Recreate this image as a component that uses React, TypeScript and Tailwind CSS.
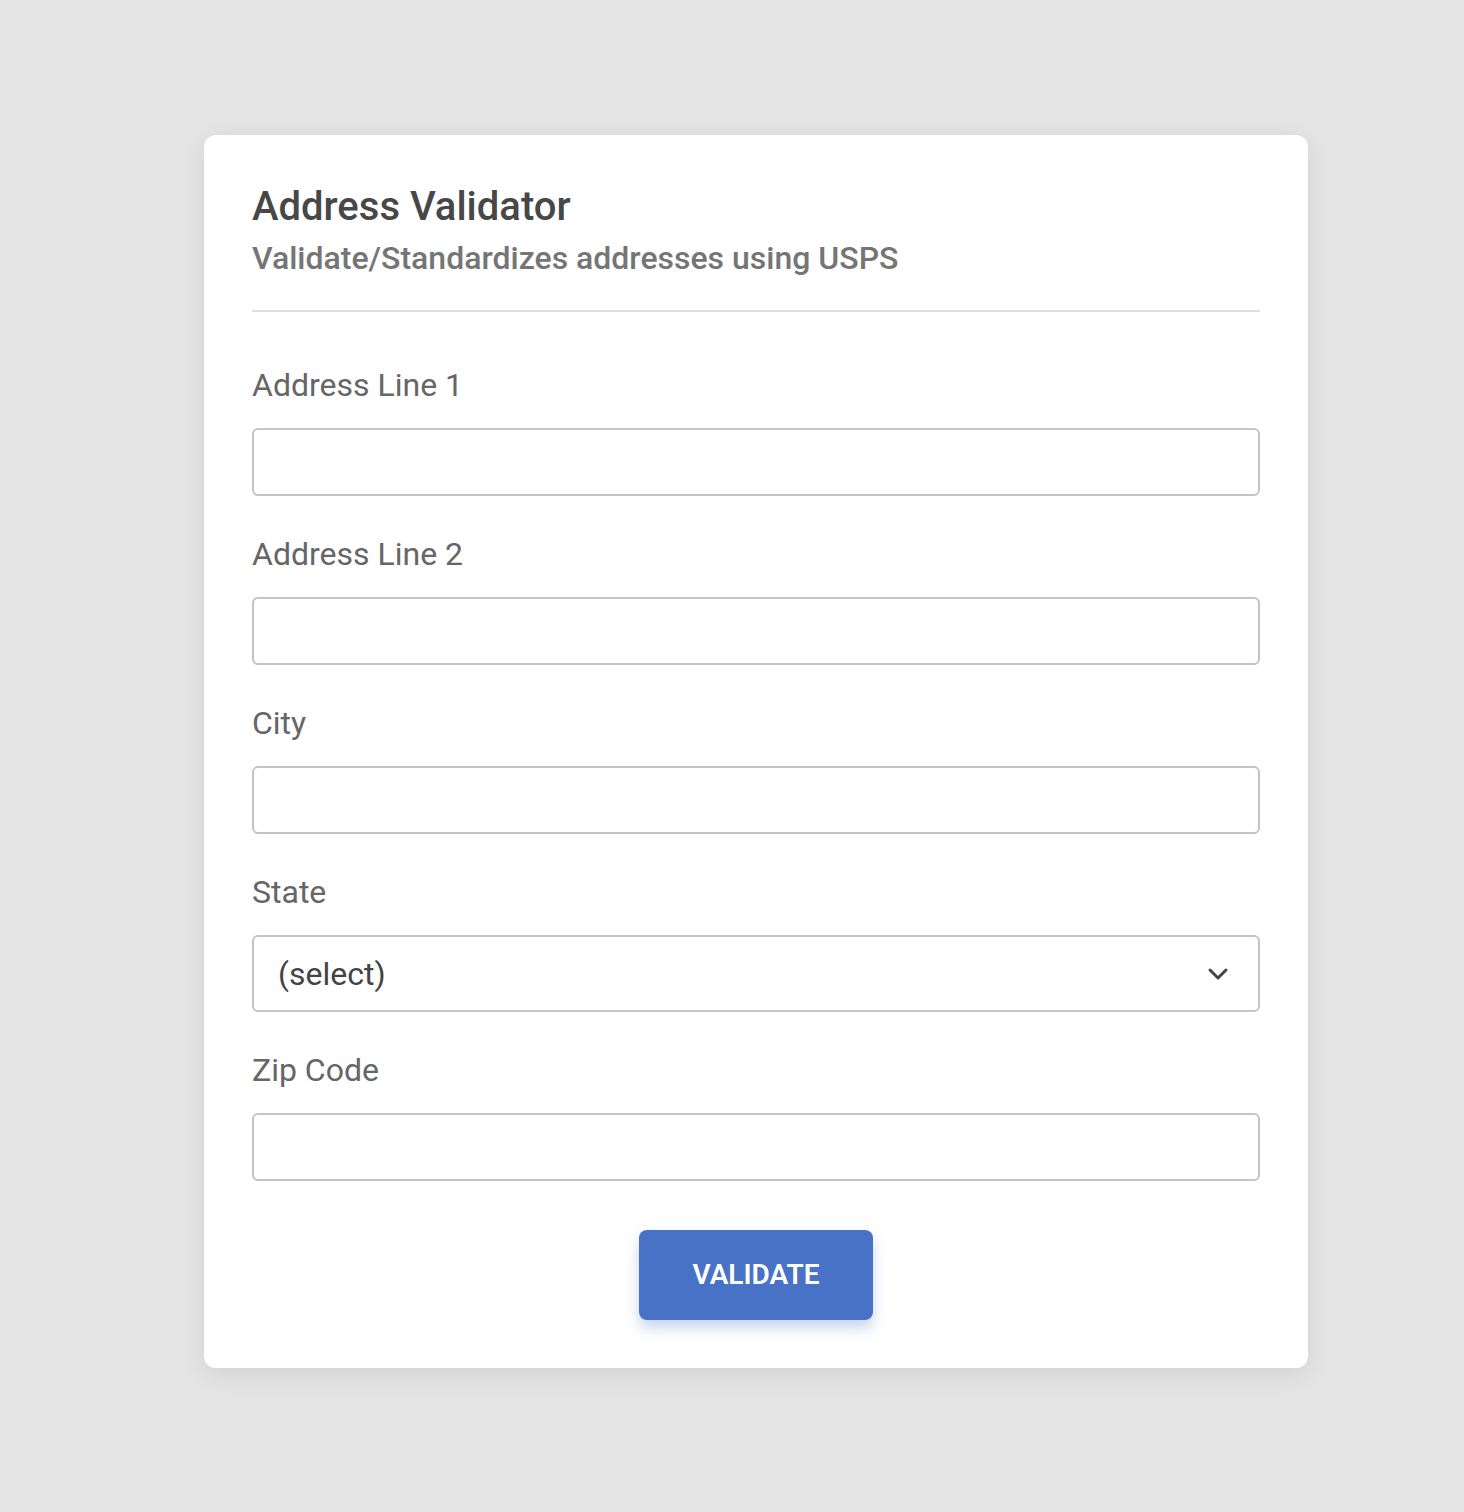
import { ChevronDown } from 'lucide-react'

const fields = ['Address Line 1', 'Address Line 2', 'City']

function Field({ label }: { label: string }) {
  return (
    <div className="flex flex-col">
      <label className="text-[32px] leading-[38px] text-[#666]">{label}</label>
      <input
        type="text"
        className="mt-[24px] h-[68px] w-full rounded-[6px] border-2 border-[#c4c4c4] bg-white px-6 text-[30px] outline-none"
      />
    </div>
  )
}

export default function App() {
  return (
    <div className="min-h-[1512px] bg-[#e4e4e4] pt-[135px] font-['Roboto',sans-serif]">
      <div className="ml-[204px] w-[1104px] rounded-[12px] bg-white p-12 shadow-[0_6px_24px_rgba(0,0,0,0.08)]">
        <h1 className="text-[40px] font-medium leading-[48px] text-[#474747]">Address Validator</h1>
        <p className="mt-[8px] text-[32px] font-medium leading-[38px] text-[#757575]">
          Validate/Standardizes addresses using USPS
        </p>
        <div className="mt-[33px] h-[2px] bg-[#dedede]" />

        <div className="mt-[54px] flex flex-col gap-[39px]">
          {fields.map((f) => (
            <Field key={f} label={f} />
          ))}
          <div className="flex flex-col">
            <label className="text-[32px] leading-[38px] text-[#666]">State</label>
            <div className="mt-[24px] flex h-[77px] w-full items-center justify-between rounded-[6px] border-2 border-[#c4c4c4] bg-white pl-6 pr-[24px]">
              <span className="text-[32px] text-[#444]">(select)</span>
              <ChevronDown className="h-8 w-8 text-[#444]" strokeWidth={2.2} />
            </div>
          </div>
          <Field label="Zip Code" />
        </div>

        <div className="mt-[49px] flex justify-center">
          <button className="h-[90px] w-[234px] rounded-[8px] bg-[#4872c6] text-[28px] font-semibold text-white shadow-[0_8px_14px_rgba(72,114,198,0.3)]">
            VALIDATE
          </button>
        </div>
      </div>
    </div>
  )
}
